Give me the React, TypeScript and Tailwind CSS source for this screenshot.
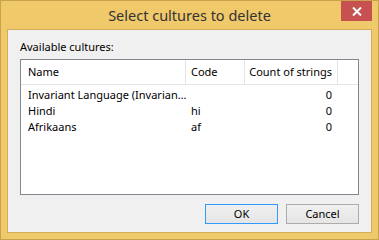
import React from "react"

const rows = [
  { name: "Invariant Language (Invarian…", code: "", count: 0 },
  { name: "Hindi", code: "hi", count: 0 },
  { name: "Afrikaans", code: "af", count: 0 },
]

export default function App() {
  return (
    <div
      className="w-[379px] h-[240px] flex flex-col bg-[#f0c96b] border border-[#c9a24e] text-[11px] text-black"
      style={{ fontFamily: '"Noto Sans", "Open Sans", sans-serif' }}
    >
      {/* Title bar */}
      <div className="h-[28px] grid grid-cols-[1fr_auto_1fr] items-start">
        <div />
        <div className="pt-[4px] text-[14.5px] leading-[20px] text-[#333333] whitespace-nowrap">Select cultures to delete</div>
        <div className="flex justify-end pr-[6px]">
          <div className="w-[31px] h-[20px] bg-[#c75050] flex items-center justify-center">
            <svg width="10" height="9" viewBox="0 0 10 9">
              <path d="M1 0.5 L9 8.5 M9 0.5 L1 8.5" stroke="white" strokeWidth="2" />
            </svg>
          </div>
        </div>
      </div>

      {/* Client area */}
      <div className="mx-[6px] mb-[6px] flex-1 border border-[#d4ad5c] bg-[#f0f0f0] flex flex-col px-[12px] pt-[9px] pb-[8px]">
        <div className="leading-[16px]">Available cultures:</div>
        <div className="mt-[4px] h-[136px] border border-[#828790] bg-white flex flex-col">
          <div className="grid grid-cols-[165px_59px_93px_1fr] h-[25px] border-b border-[#e5e5e5] whitespace-nowrap">
            <div className="border-r border-[#e5e5e5] pl-[7px] flex items-center">Name</div>
            <div className="border-r border-[#e5e5e5] pl-[5px] flex items-center">Code</div>
            <div className="border-r border-[#e5e5e5] pr-[5px] flex items-center justify-end">Count of strings</div>
            <div />
          </div>
          <div className="pt-[2px] flex flex-col">
            {rows.map((r) => (
              <div key={r.name} className="grid grid-cols-[165px_59px_93px_1fr] h-[16px] leading-[16px] whitespace-nowrap">
                <div className="pl-[7px] overflow-hidden">{r.name}</div>
                <div className="pl-[5px]">{r.code}</div>
                <div className="pr-[6px] text-right">{r.count}</div>
                <div />
              </div>
            ))}
          </div>
        </div>
        <div className="mt-auto flex justify-end gap-[8px]">
          <button className="w-[73px] h-[20px] border border-[#3399ff] bg-gradient-to-b from-[#f0f0f0] to-[#e5e5e5] leading-[18px]">OK</button>
          <button className="w-[73px] h-[20px] border border-[#acacac] bg-gradient-to-b from-[#f0f0f0] to-[#e5e5e5] leading-[18px]">Cancel</button>
        </div>
      </div>
    </div>
  )
}
